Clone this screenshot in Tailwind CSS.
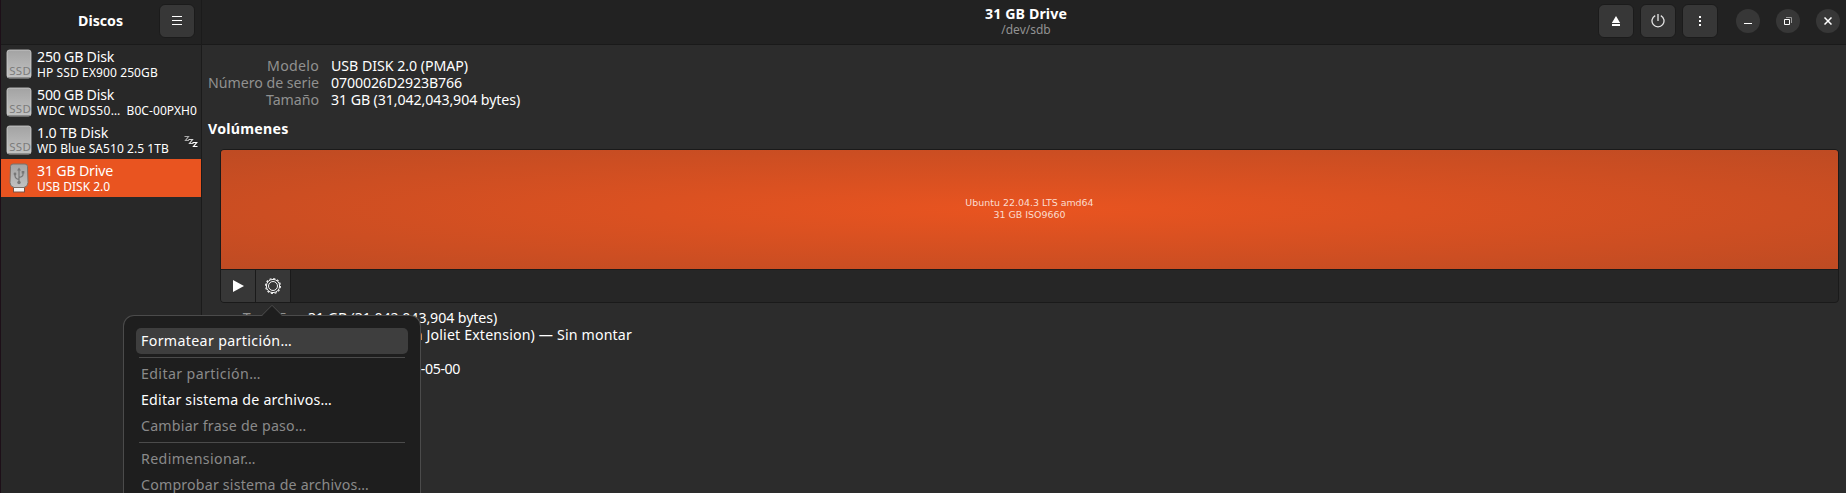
<!DOCTYPE html>
<html lang="es">
<head>
<meta charset="utf-8">
<title>Discos</title>
<script src="https://cdn.jsdelivr.net/npm/@tailwindcss/browser@4"></script>
</head>
<body class="w-[1846px] h-[493px] overflow-hidden bg-[#2c2c2c] text-white font-['Noto_Sans',sans-serif] text-[14.2px] leading-[17px] whitespace-nowrap">
<svg class="absolute w-0 h-0">
  <defs>
    <linearGradient id="metal" x1="0" y1="0" x2="0" y2="1"><stop offset="0" stop-color="#a3a3a3"/><stop offset="1" stop-color="#c2c2c2"/></linearGradient>
    <symbol id="ssd" viewBox="0 0 26 30">
      <rect x="1" y="1" width="24" height="28" rx="2.5" fill="url(#metal)" stroke="#d0d0d0" stroke-width=".8"/>
      <path d="M1.500 28.500h23" stroke="#8c8c8c" stroke-width="1"/>
      <text x="3.300" y="25.500" font-family="Noto Sans" font-size="11.500" textLength="21.500" fill="#7c7c7c">SSD</text>
    </symbol>
  </defs>
</svg>
<div class="relative flex w-full h-full">
  <aside class="flex flex-col w-[202px] shrink-0 bg-[#282828] border-l border-l-[#1d0f18] border-r border-r-[#1b1b1b]">
    <header class="flex h-[45px] shrink-0 bg-[#222222] border-b border-[#1a1a1a] pl-[77px] pr-[6px] pt-1 justify-between">
      <h1 class="font-bold pt-2">Discos</h1>
      <button class="flex w-[36px] h-[34px] items-center justify-center rounded-md bg-[#373737] border border-[#1b1b1b]">
        <svg class="w-[10px] h-[10px]" viewBox="0 0 10 10" shape-rendering="crispEdges"><path d="M0 .5h10M0 4.500h10M0 8.500h10" stroke="#fff"/></svg>
      </button>
    </header>
    <div class="flex h-[38px] pt-[3px] pl-[5px]">
      <svg class="w-[26px] h-[30px] mr-[5px] mt-px"><use href="#ssd"/></svg>
      <div><div class="tracking-[-0.24px]">250 GB Disk</div><div class="text-[12px] leading-[15px] tracking-[0.11px]">HP SSD EX900 250GB</div></div>
    </div>
    <div class="flex h-[38px] pt-[3px] pl-[5px]">
      <svg class="w-[26px] h-[30px] mr-[5px] mt-px"><use href="#ssd"/></svg>
      <div><div class="tracking-[-0.24px]">500 GB Disk</div><div class="flex w-[160px] justify-between text-[12px] leading-[15px]"><span class="tracking-[0.31px]">WDC WDS50…</span><span class="tracking-[0.08px]">B0C-00PXH0</span></div></div>
    </div>
    <div class="flex h-[38px] pt-[3px] pl-[5px]">
      <svg class="w-[26px] h-[30px] mr-[5px] mt-px"><use href="#ssd"/></svg>
      <div class="w-[147px]"><div class="tracking-[-0.17px]">1.0 TB Disk</div><div class="text-[12px] leading-[15px] tracking-[0.06px]">WD Blue SA510 2.5 1TB</div></div>
      <svg class="w-[14px] h-[13px] mt-[11px]" viewBox="0 0 14 13" fill="none" stroke-width="1.200"><path d="M.5 1.500h4L1.500 5.500h3.500" stroke="#aaa"/><path d="M4.500 4.500h4L5.500 8.500h4" stroke="#d4d4d4"/><path d="M8.500 7.500h4.200L9.500 11.500h4" stroke="#fff"/></svg>
    </div>
    <div class="flex h-[38px] pt-[3px] pl-[8px] bg-[#e95420]">
      <svg class="w-[20px] h-[31px] mr-[8px]" viewBox="0 0 20 31">
        <rect x="4.500" y="24.500" width="11" height="5.500" fill="#f4f4f4" stroke="#7d5142"/>
        <path d="M4 2h12a2.500 2.500 0 0 1 2.500 2.500l.5 16q0 4-4 5H5q-4-1-4-5l.5-16A2.500 2.500 0 0 1 4 2z" fill="url(#metal)" stroke="#7b7069"/>
        <g fill="none" stroke="#777" stroke-width="1.200"><path d="M10 8v12M10 17.500q-4-.8-4-4V12M10 15.500q4-.8 4-3V11"/></g>
        <path d="M10 5.500l2 3H8zM12.700 9h2.600v2.600h-2.600z" fill="#777"/><circle cx="6" cy="12" r="1.400" fill="#777"/><circle cx="10" cy="20.500" r="1.700" fill="#777"/>
      </svg>
      <div><div class="tracking-[-0.2px]">31 GB Drive</div><div class="text-[12px] leading-[15px]">USB DISK 2.0</div></div>
    </div>
  </aside>

  <main class="flex flex-col flex-1 min-w-0">
    <header class="flex h-[45px] shrink-0 bg-[#222222] border-b border-[#1a1a1a] pt-1">
      <div class="flex flex-col items-center w-[1396px] pl-[252px] pt-px">
        <div class="font-bold tracking-[0.1px]">31 GB Drive</div>
        <div class="text-[12px] leading-[15px] text-[#929292]">/dev/sdb</div>
      </div>
      <div class="flex gap-[6px]">
        <button class="flex w-[36px] h-[34px] items-center justify-center rounded-md bg-[#373737] border border-[#1b1b1b]"><svg class="w-[10px] h-[10px]" viewBox="0 0 10 10" fill="#fff"><path d="M5 0l4.200 7H.8zM1 8h8v2H1z"/></svg></button>
        <button class="flex w-[36px] h-[34px] items-center justify-center rounded-md bg-[#373737] border border-[#1b1b1b]"><svg class="w-[14px] h-[14px]" viewBox="0 0 14 14" fill="none" stroke="#e6e6e6" stroke-width="1.300"><path d="M7 0v7M4.200 1.600a6 6 0 1 0 5.600 0"/></svg></button>
        <button class="flex w-[36px] h-[34px] items-center justify-center rounded-md bg-[#373737] border border-[#1b1b1b]"><svg class="w-[2px] h-[10px]" viewBox="0 0 2 10" fill="#fff"><path d="M0 0h2v2H0zM0 4h2v2H0zM0 8h2v2H0z"/></svg></button>
      </div>
      <div class="flex gap-4 pl-[18px] pt-[5px]">
        <button class="flex w-6 h-6 items-center justify-center rounded-full bg-[#373737]"><svg class="w-2 h-2" viewBox="0 0 8 8"><path d="M0 6h8v1H0z" fill="#fff"/></svg></button>
        <button class="flex w-6 h-6 items-center justify-center rounded-full bg-[#373737]"><svg class="w-2 h-2" viewBox="0 0 8 8" fill="none"><path d="M2 .5h5.500V6" stroke="#999"/><path d="M.5 2.500h5v5h-5z" stroke="#fff"/></svg></button>
        <button class="flex w-6 h-6 items-center justify-center rounded-full bg-[#373737]"><svg class="w-2 h-2" viewBox="0 0 8 8"><path d="M.5.5l7 7M7.500.5l-7 7" stroke="#fff" stroke-width="1.500"/></svg></button>
      </div>
    </header>

    <div class="flex gap-3 pt-3">
      <div class="flex flex-col items-end w-[117px] text-[#919190]"><div class="tracking-[0.26px]">Modelo</div><div class="tracking-[-0.03px]">Número de serie</div><div class="tracking-[-0.04px]">Tamaño</div></div>
      <div><div class="tracking-[-0.04px]">USB DISK 2.0 (PMAP)</div><div class="tracking-[-0.14px]">0700026D2923B766</div><div class="tracking-[-0.09px]">31 GB (31,042,043,904 bytes)</div></div>
    </div>
    <h2 class="pl-[6px] pt-3 font-bold tracking-[0.24px]">Volúmenes</h2>

    <section class="ml-[18px] mt-[12px] w-[1619px] h-[154px] border border-[#1a1a1a] rounded-[4px] bg-[#262626] overflow-hidden">
      <div class="flex flex-col items-center h-[120px] border-b border-[#1a1a1a] pt-[47px] bg-[radial-gradient(ellipse_farthest-corner,#e95420,#be4b23)] font-['DejaVu_Sans',sans-serif] text-[9.45px] leading-[12px] text-[#fbdccf]"><div>Ubuntu 22.04.3 LTS amd64</div><div>31 GB ISO9660</div></div>
      <div class="flex h-[32px]">
        <button class="flex w-[35px] items-center justify-center bg-[#373737] border-r border-[#1a1a1a]"><svg class="w-[11px] h-[12px]" viewBox="0 0 11 12"><path d="M0 0l11 6-11 6z" fill="#fff"/></svg></button>
        <button class="flex w-[35px] items-center justify-center bg-[#373737] border-r border-[#1a1a1a]"><svg class="w-4 h-4" viewBox="0 0 16 16" fill="none" stroke="#f4f4f4"><circle cx="8" cy="8" r="6.600" stroke-width="1"/><circle cx="8" cy="8" r="4.500" stroke-width="1"/><circle cx="8" cy="8" r="7.400" stroke-width="1.200" stroke-dasharray="2.100 1.775"/></svg></button>
      </div>
    </section>

    <div class="flex gap-3 pt-[6px]">
      <div class="flex flex-col items-end w-[94px] text-[#919190]"><div>Tamaño</div><div>Contenido</div><div>Dispositivo</div><div>UUID</div></div>
      <div class="flex flex-col"><div class="tracking-[-0.09px]">31 GB (31,042,043,904 bytes)</div><div class="flex w-[324px] justify-end tracking-[0.15px]">ISO 9660 (version Joliet Extension) — Sin montar</div><div>/dev/sdb</div><div class="flex w-[152px] justify-end tracking-[-0.4px]">2023-08-08-01-05-00</div></div>
    </div>
  </main>

  <!-- Partition actions popover -->
  <div class="absolute left-[123px] top-[315px] w-[298px] h-[178px] rounded-t-[11px] border border-b-0 border-[#4b4b4b] bg-[#1e1e1e] px-[12px] pt-[12px]">
    <svg class="absolute left-[136px] top-[-12px] w-[24px] h-[13px]" viewBox="0 0 24 13"><path d="M1 13L12 1.500 23 13z" fill="#1e1e1e"/><path d="M0 11.500h1.800L12 1.300l10.200 10.200H24" fill="none" stroke="#4b4b4b"/></svg>
    <div class="h-[26px] rounded-[5px] bg-[#3e3e3e] pl-[5px] pt-1 tracking-[0.35px]">Formatear partición…</div>
    <div class="h-px mx-[3px] my-[3px] bg-[#4b4b4b]"></div>
    <div class="h-[26px] pl-[5px] pt-1 text-[#8a8a8a] tracking-[0.38px]">Editar partición…</div>
    <div class="h-[26px] pl-[5px] pt-1 tracking-[0.21px]">Editar sistema de archivos…</div>
    <div class="h-[26px] pl-[5px] pt-1 text-[#8a8a8a] tracking-[0.21px]">Cambiar frase de paso…</div>
    <div class="h-px mx-[3px] my-[3px] bg-[#4b4b4b]"></div>
    <div class="h-[26px] pl-[5px] pt-1 text-[#8a8a8a] tracking-[0.36px]">Redimensionar…</div>
    <div class="h-[21px] pl-[5px] pt-1 text-[#8a8a8a] tracking-[0.19px]">Comprobar sistema de archivos…</div>
  </div>
</div>
</body>
</html>
